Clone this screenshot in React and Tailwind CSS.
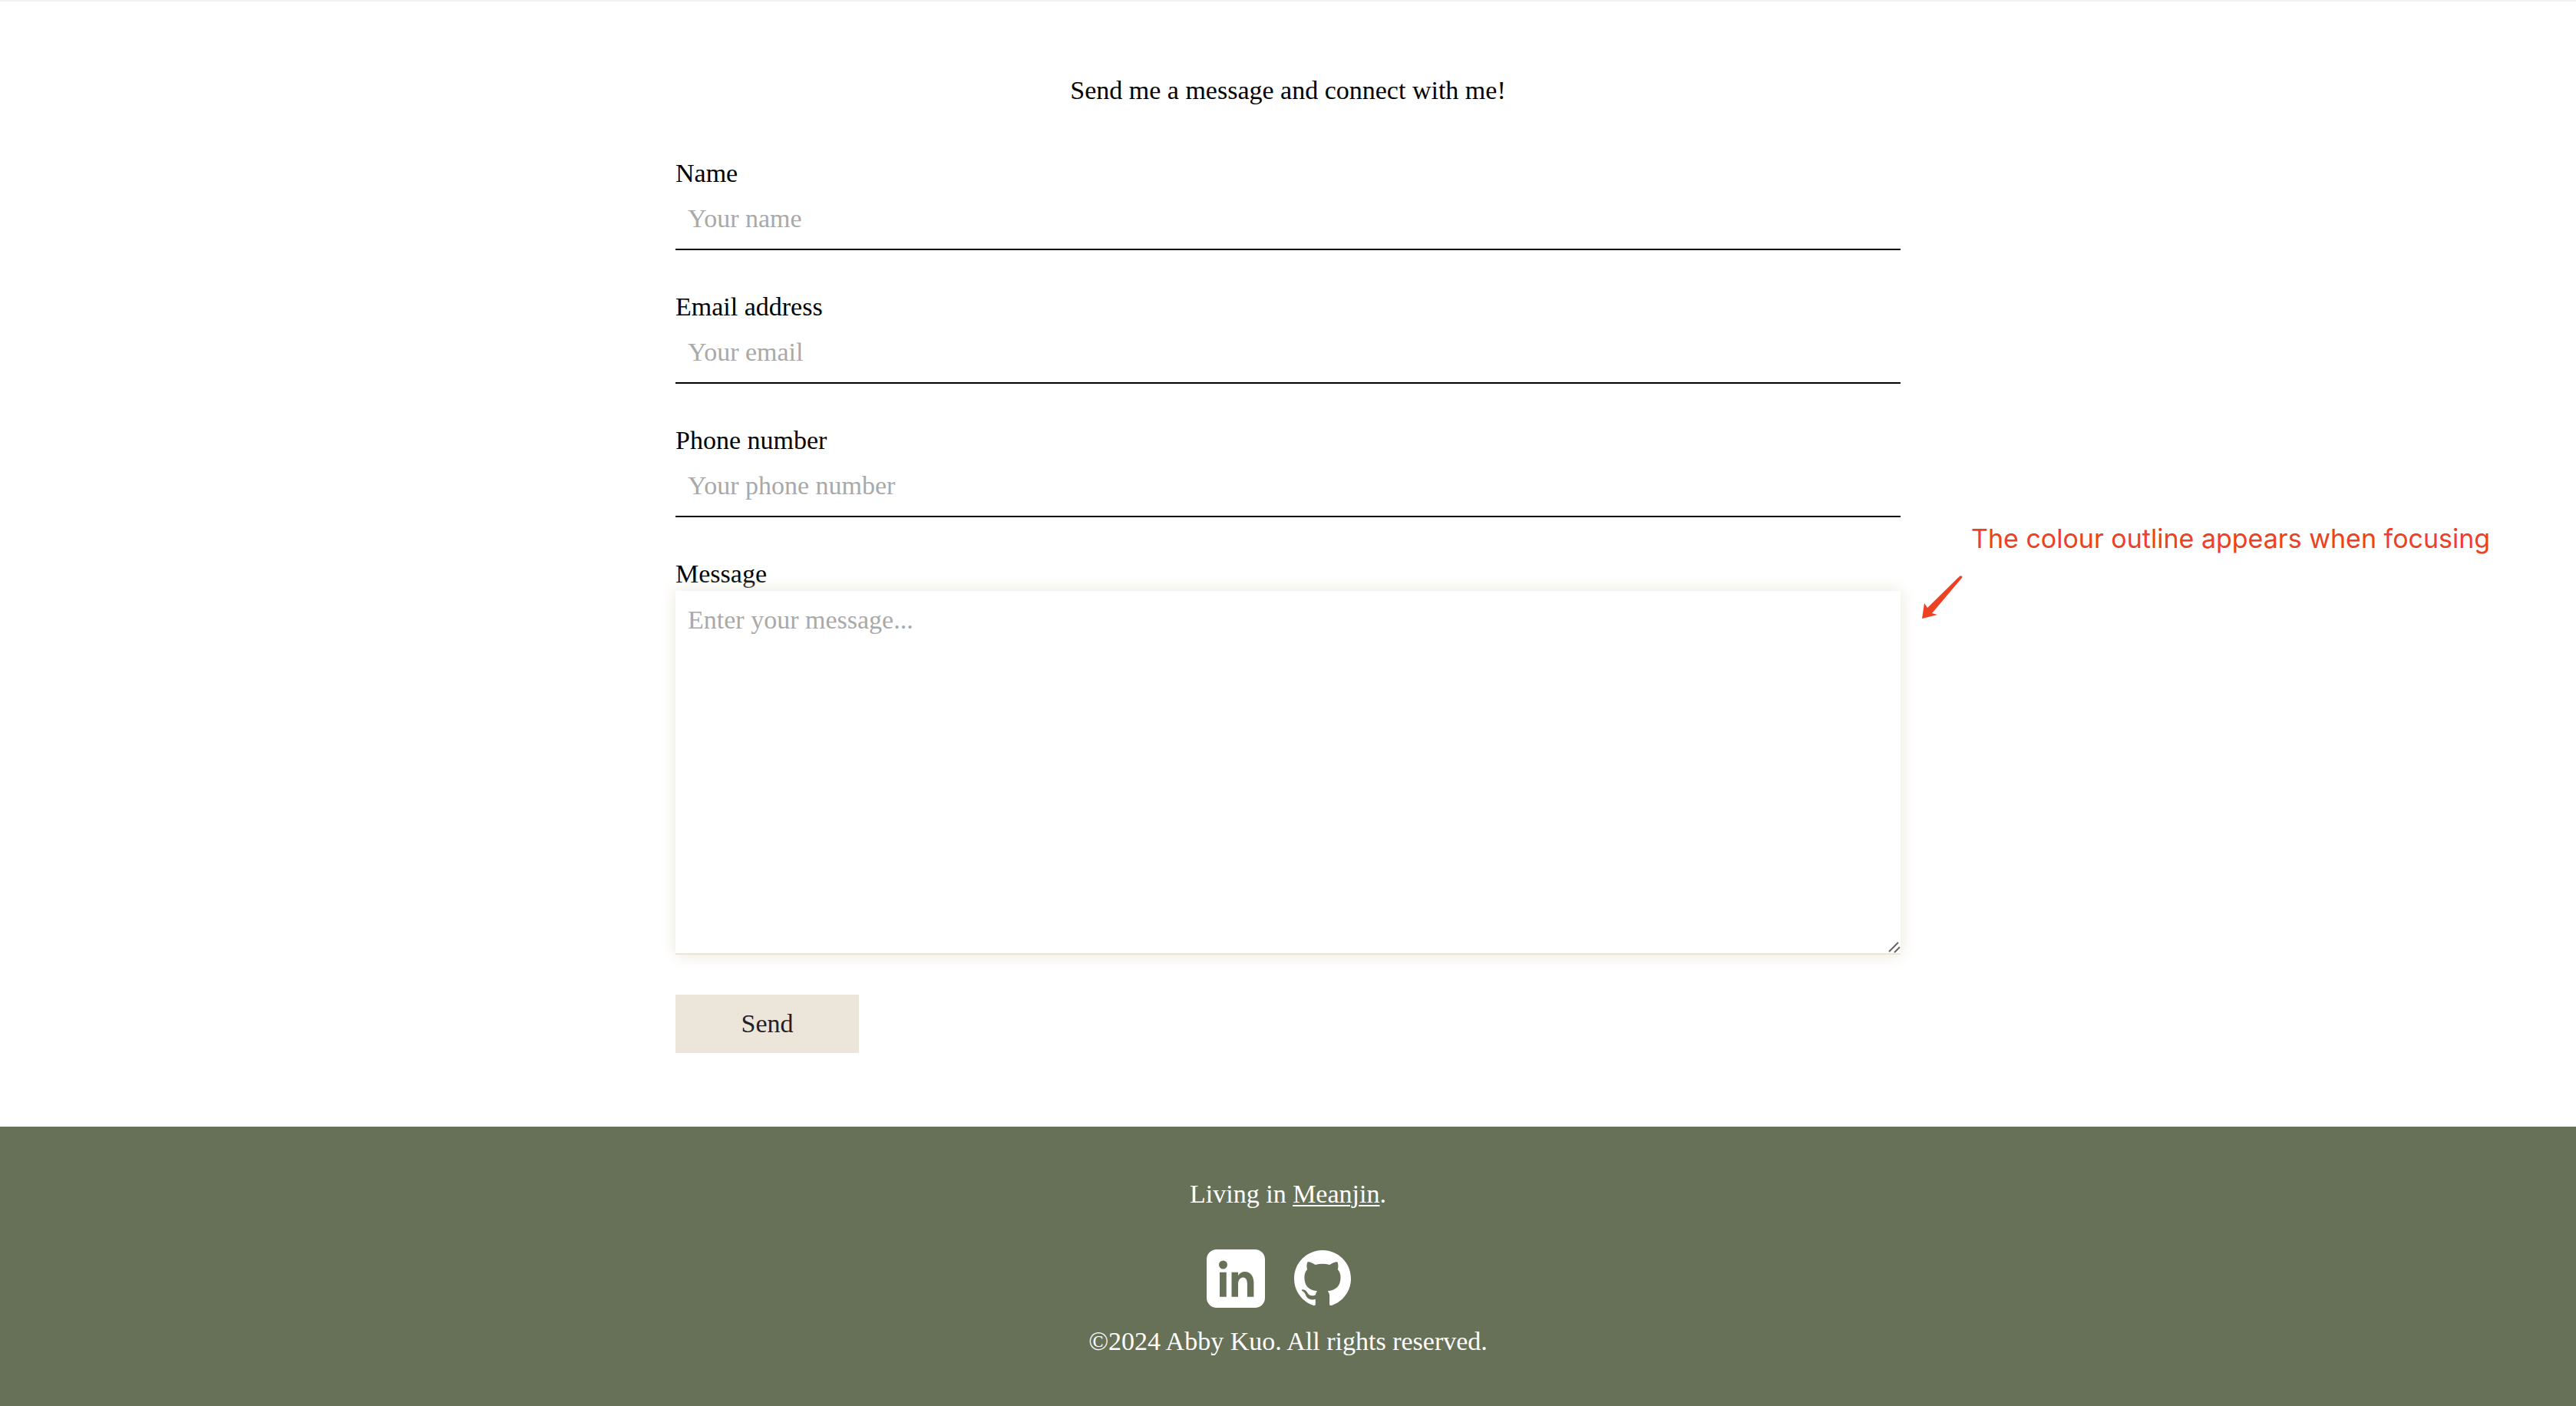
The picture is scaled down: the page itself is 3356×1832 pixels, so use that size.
import { SiGithub } from "react-icons/si";

const fields = [
  { id: "name", label: "Name", type: "text", placeholder: "Your name" },
  { id: "email", label: "Email address", type: "email", placeholder: "Your email" },
  { id: "phone", label: "Phone number", type: "tel", placeholder: "Your phone number" },
];

function LinkedInIcon() {
  return (
    <svg viewBox="0 0 76 76" className="size-[76px]" aria-hidden="true">
      <path
        fill="currentColor"
        fillRule="evenodd"
        d="M13 0h50a13 13 0 0 1 13 13v50a13 13 0 0 1-13 13H13A13 13 0 0 1 0 63V13A13 13 0 0 1 13 0ZM21.500 14.500a5.500 5.500 0 1 0 0 11a5.500 5.500 0 1 0 0-11ZM17 29.700v32h8.800v-32ZM32.500 29.700v32H41V45.500c0-5.500 2.500-9 6.300-9 3.700 0 5.600 3 5.600 8.500v16.700h8.500V43.500c0-9-4.700-14.500-11.400-14.500-4.200 0-7.300 2-9 5.200v-4.500Z"
      />
    </svg>
  );
}

function Annotation() {
  return (
    <div className="absolute top-0 left-full -mt-22 ml-7 flex flex-col text-[#ee4023]">
      <p className="ml-16 text-[34px] leading-10 whitespace-nowrap font-['Inter',sans-serif]">
        The colour outline appears when focusing
      </p>
      <svg viewBox="0 0 54 58" className="mt-7 h-[58px] w-[54px]" aria-hidden="true">
        <path
          fill="currentColor"
          d="M0 56 3 36 7 42 49 .8Q51-.5 52 .8T51.500 3.500L13 49 20 51Z"
        />
      </svg>
    </div>
  );
}

function ResizeGrip() {
  return (
    <svg
      viewBox="0 0 16 16"
      className="pointer-events-none absolute right-0 bottom-0.5 size-4"
      fill="none"
      stroke="#666"
      strokeWidth="2"
      aria-hidden="true"
    >
      <path d="M1 14 13 2M8 15l7-7" />
    </svg>
  );
}

export default function App() {
  return (
    <div className="flex min-h-screen flex-col overflow-x-hidden border-t-2 border-[#f2f2f2] bg-white text-[34px] leading-10 text-black font-['Liberation_Serif',serif]">
      <main className="mx-auto flex w-full max-w-[1596px] flex-col pt-24 pb-24">
        <h1 className="text-center">Send me a message and connect with me!</h1>
        <form className="mt-17 flex flex-col" onSubmit={(e) => e.preventDefault()}>
          {fields.map((f) => (
            <div key={f.id} className="mb-[54px] flex flex-col">
              <label htmlFor={f.id}>{f.label}</label>
              <input
                id={f.id}
                type={f.type}
                placeholder={f.placeholder}
                className="h-20 w-full border-b-2 border-black px-4 outline-none placeholder:text-[#a9a9a9]"
              />
            </div>
          ))}
          <label htmlFor="message">Message</label>
          <div className="relative mt-0.5">
            <textarea
              id="message"
              placeholder="Enter your message..."
              className="block h-[474px] w-full resize-y border-b-2 border-[#e9e6d8] bg-white px-4 py-[18px] shadow-[0_0_20px_#e9e6d8] outline-none placeholder:text-[#a9a9a9] [&::-webkit-resizer]:bg-transparent"
            />
            <ResizeGrip />
            <Annotation />
          </div>
          <button type="submit" className="mt-[52px] h-19 w-[239px] bg-[#ece5da] text-[#222]">
            Send
          </button>
        </form>
      </main>
      <footer className="flex grow flex-col items-center bg-[#677158] pt-17 pb-10 text-white">
        <p>
          Living in{" "}
          <a href="#meanjin" className="underline decoration-2 underline-offset-3">
            Meanjin
          </a>
          .
        </p>
        <div className="mt-[52px] mr-6 flex gap-[38px]">
          <a href="#linkedin" aria-label="LinkedIn">
            <LinkedInIcon />
          </a>
          <a href="#github" aria-label="GitHub">
            <SiGithub className="size-[74px]" />
          </a>
        </div>
        <p className="mt-6">©2024 Abby Kuo. All rights reserved.</p>
      </footer>
    </div>
  );
}
